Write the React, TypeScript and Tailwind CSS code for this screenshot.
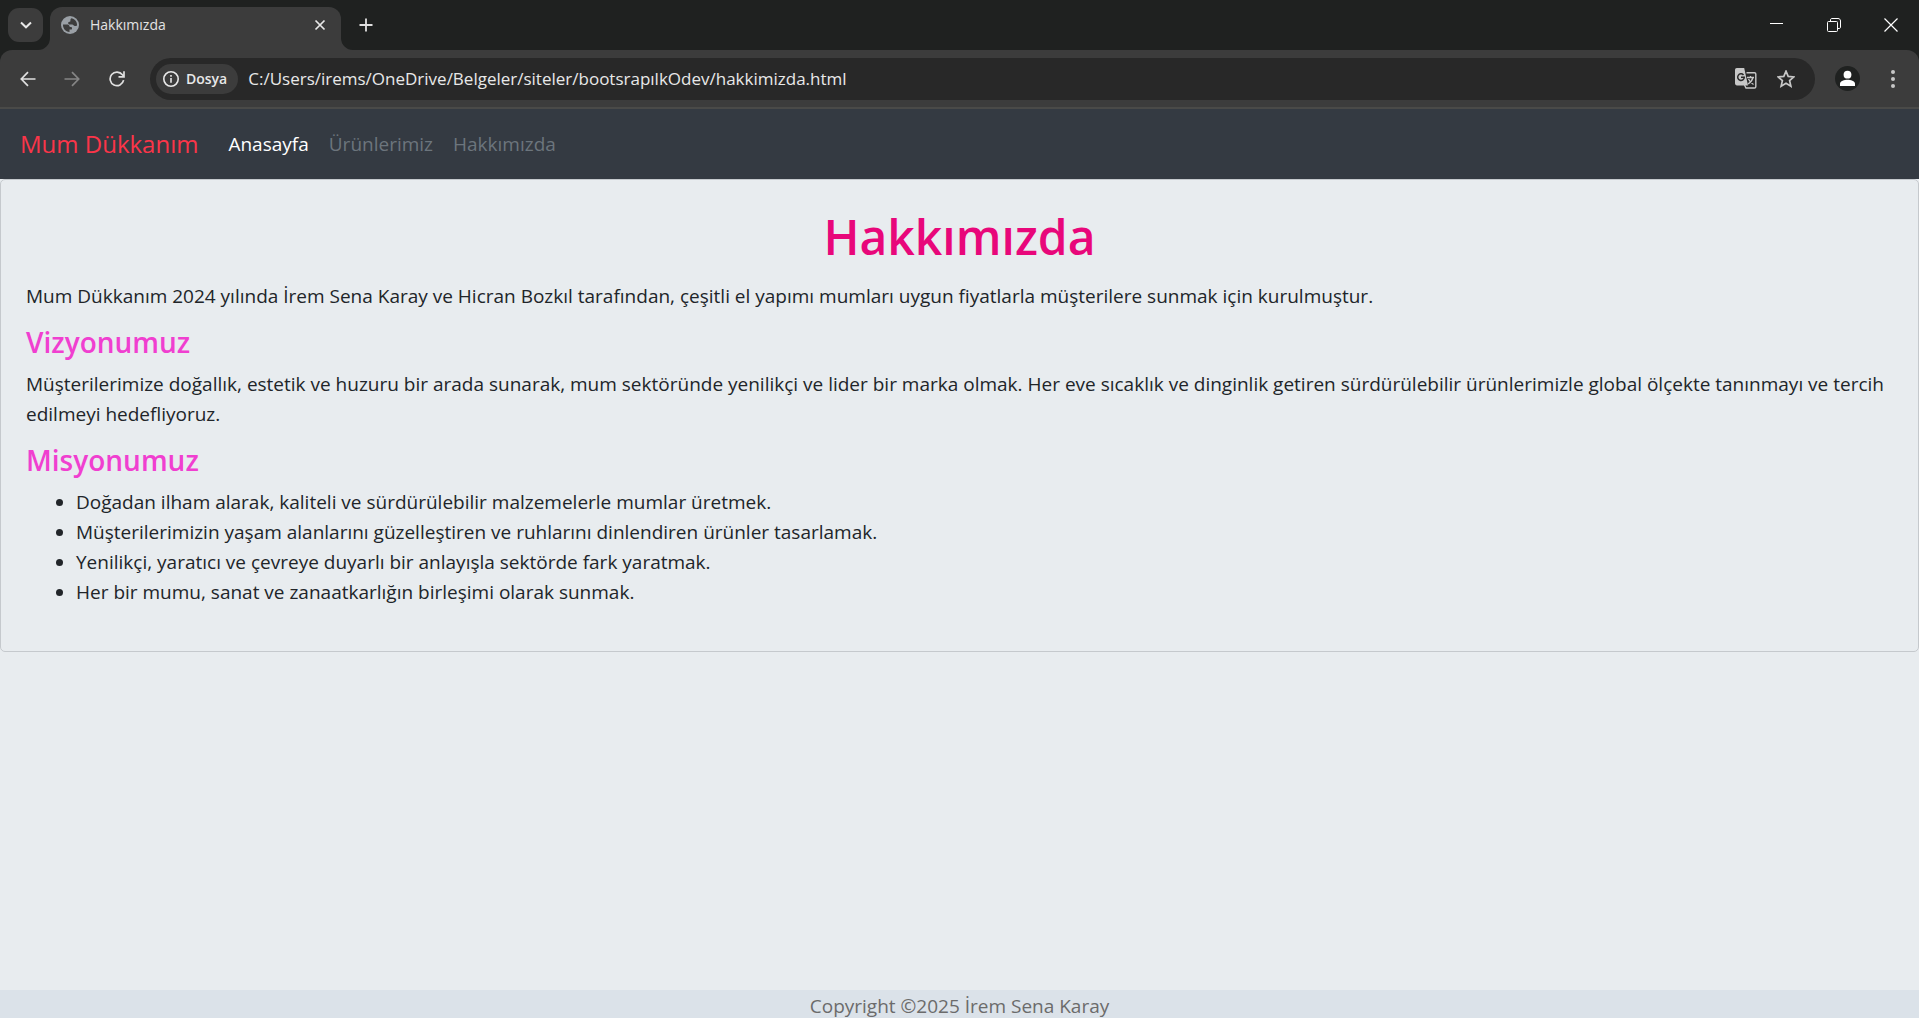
import React from "react";

const missions = [
  "Doğadan ilham alarak, kaliteli ve sürdürülebilir malzemelerle mumlar üretmek.",
  "Müşterilerimizin yaşam alanlarını güzelleştiren ve ruhlarını dinlendiren ürünler tasarlamak.",
  "Yenilikçi, yaratıcı ve çevreye duyarlı bir anlayışla sektörde fark yaratmak.",
  "Her bir mumu, sanat ve zanaatkarlığın birleşimi olarak sunmak.",
];

function TabStrip() {
  return (
    <div className="flex h-[50px] items-stretch bg-[#1f2120]">
      <div className="flex items-center pl-2 pr-[7px]">
        <button aria-label="Sekme ara" className="flex h-[34px] w-[35px] items-center justify-center rounded-[11px] bg-[#3c3c3c]">
          <svg width="12" height="8" viewBox="0 0 12 8" fill="none" stroke="#e8e8e8" strokeWidth="2">
            <path d="M1 1.5 6 6.3 11 1.5" />
          </svg>
        </button>
      </div>
      <div className="relative mt-[7px] flex w-[291px] items-center rounded-t-xl bg-[#3c3c3c] pb-[7px] pl-[11px] pr-[15px]">
        <svg className="absolute bottom-0 -left-3" width="12" height="12" viewBox="0 0 12 12" fill="#3c3c3c">
          <path d="M12 0v12H0A12 12 0 0 0 12 0z" />
        </svg>
        <svg className="absolute bottom-0 -right-3" width="12" height="12" viewBox="0 0 12 12" fill="#3c3c3c">
          <path d="M0 0v12h12A12 12 0 0 1 0 0z" />
        </svg>
        <svg width="18" height="18" viewBox="0 0 18 18">
          <circle cx="9" cy="9" r="9" fill="#9aa0a6" />
          <path
            d="M2 8.4h3.800c1.500 0 2.600.5 2.600 1.700 0 .8.500 1 1.300 1 .9 0 1.300.5 1.300 1.300 0 .9-.5 1.200-1.300 1.200H8.500v2.300C4.600 15.700 1.800 12.500 2 8.400z"
            fill="#3c3c3c"
          />
          <path
            d="M10.800 2.200C14 3 16.200 5.800 16.100 9.200c-.6.700-1.300 1-2.200.9-1.300-.1-1.500-1.500-2.700-1.500-1.500 0-3 .1-3.700-.7-.8-.9-.2-2.200.9-2.200.9 0 1-.6 1-1.300 0-1 .3-1.900 1.400-2.200z"
            fill="#3c3c3c"
          />
        </svg>
        <span className="ml-[11px] flex-1 text-sm text-[#e3e3e3]">Hakkımızda</span>
        <button aria-label="Sekmeyi kapat">
          <svg width="12" height="12" viewBox="0 0 12 12" stroke="#e8e8e8" strokeWidth="1.700">
            <path d="M1.500 1.500l9 9M10.500 1.500l-9 9" />
          </svg>
        </button>
      </div>
      <button aria-label="Yeni sekme" className="ml-[18px]">
        <svg width="14" height="14" viewBox="0 0 14 14" stroke="#e0e0e0" strokeWidth="1.800">
          <path d="M7 .5v13M.5 7h13" />
        </svg>
      </button>
      <div className="ml-auto flex items-center gap-[43px] pr-[21px]">
        <button aria-label="Simge durumuna küçült">
          <svg width="14" height="14" viewBox="0 0 14 14" stroke="#fff" shapeRendering="crispEdges">
            <path d="M0 5.500h13" />
          </svg>
        </button>
        <button aria-label="Önceki boyut">
          <svg width="14" height="14" viewBox="0 0 14 14" fill="none" stroke="#fff">
            <rect x=".5" y="3.500" width="10" height="10" rx="1" />
            <path d="M3.500 3V2c0-1 .5-1.500 1.500-1.500h6c1.500 0 2.500 1 2.500 2.500v6c0 1-.5 1.500-1.500 1.500h-1" />
          </svg>
        </button>
        <button aria-label="Kapat">
          <svg width="14" height="14" viewBox="0 0 14 14" stroke="#fff" strokeWidth="1.200">
            <path d="M.5.5l13 13M13.500.5l-13 13" />
          </svg>
        </button>
      </div>
    </div>
  );
}

function Toolbar() {
  return (
    <div className="bg-[#1f2120]">
      <div className="flex h-[59px] items-center rounded-t-xl border-b-2 border-[#4a4a48] bg-[#3c3c3c] pl-5 pr-6">
        <button aria-label="Geri">
          <svg width="16" height="16" viewBox="0 0 16 16" fill="none" stroke="#e0e0e0" strokeWidth="1.700">
            <path d="M15.500 8H1.500M8 1.200 1.300 8 8 14.800" />
          </svg>
        </button>
        <button aria-label="İleri" className="ml-[28px]">
          <svg width="16" height="16" viewBox="0 0 16 16" fill="none" stroke="#858585" strokeWidth="1.700">
            <path d="M.5 8h14M8 1.200 14.700 8 8 14.800" />
          </svg>
        </button>
        <button aria-label="Yenile" className="ml-[29px]">
          <svg width="16" height="16" viewBox="0 0 16 16" fill="none" stroke="#e0e0e0" strokeWidth="1.700">
            <path d="M14.600 9.200A6.800 6.800 0 1 1 13.400 3.800L15 5.500M15 .3v5.600H9.500" />
          </svg>
        </button>
        <div className="ml-[25px] flex h-[42px] flex-1 items-center rounded-full bg-[#282828] pl-[6px] pr-5">
          <button className="flex h-[30px] items-center rounded-full bg-[#3c3c3c] pl-[7px] pr-[11px] text-sm font-semibold text-[#e8e8e8]">
            <svg className="mr-[7px]" width="16" height="16" viewBox="0 0 16 16" fill="none" stroke="#e8e8e8" strokeWidth="1.600">
              <circle cx="8" cy="8" r="7.200" />
              <path d="M8 7v4.800M8 4v1.700" />
            </svg>
            Dosya
          </button>
          <input
            aria-label="Adres"
            className="ml-[10px] min-w-0 flex-1 bg-transparent text-[17px] text-[#e8e8e8] outline-none"
            defaultValue="C:/Users/irems/OneDrive/Belgeler/siteler/bootsrapılkOdev/hakkimizda.html"
          />
          <button aria-label="Bu sayfayı çevir">
            <svg width="22" height="22" viewBox="0 0 22 22">
              <path d="M11.500 4.800H19.500a1.300 1.300 0 0 1 1.300 1.300v12.600a1.300 1.300 0 0 1-1.300 1.300H11L9.500 17" fill="none" stroke="#c7c7c7" strokeWidth="1.400" />
              <path d="M12 9.500h7M15.500 8v1.500M18 9.500c-.8 3-2.500 5-5 6.500M13.500 11c1 2.300 2.500 4 5 5.500" fill="none" stroke="#c7c7c7" strokeWidth="1.300" />
              <path d="M1.800 0h7.400L13 17.400H1.800A1.800 1.800 0 0 1 0 15.600V1.800A1.800 1.800 0 0 1 1.800 0z" fill="#c7c7c7" />
              <path d="M8.500 7A3.300 3.300 0 1 0 9.300 9.300H6" fill="none" stroke="#282828" strokeWidth="1.500" />
            </svg>
          </button>
          <button aria-label="Bu sekmeye yer işareti koy" className="ml-5">
            <svg width="18" height="18" viewBox="0 0 18 18" fill="none" stroke="#c7c7c7" strokeWidth="1.700">
              <path d="M9 1.200l2.200 5.200 5.700.5-4.300 3.700 1.300 5.600L9 13.300l-4.900 2.900 1.300-5.600L1.100 6.900l5.700-.5z" />
            </svg>
          </button>
        </div>
        <button aria-label="Profil" className="ml-5">
          <svg width="25" height="25" viewBox="0 0 25 25">
            <circle cx="12.500" cy="12.500" r="12.500" fill="#1f2120" />
            <circle cx="12.500" cy="8.700" r="3.900" fill="#fff" />
            <path d="M5 20v-2.500c0-2.500 4.500-3.800 7.500-3.800s7.500 1.300 7.500 3.800V20z" fill="#fff" />
          </svg>
        </button>
        <button aria-label="Menü" className="ml-[31px]">
          <svg width="4" height="18" viewBox="0 0 4 18" fill="#c7c7c7">
            <circle cx="2" cy="2" r="2" />
            <circle cx="2" cy="9" r="2" />
            <circle cx="2" cy="16" r="2" />
          </svg>
        </button>
      </div>
    </div>
  );
}

export default function App() {
  return (
    <div className='flex min-h-screen flex-col bg-[#e8ecef] font-["Open_Sans","Noto_Sans",sans-serif] text-[#212529]'>
      <TabStrip />
      <Toolbar />
      <nav className="flex h-[70px] items-center bg-[#343a42] px-5">
        <a href="#" className="mr-[30px] text-2xl text-[#fb3549]">Mum Dükkanım</a>
        <div className="flex gap-5 text-[19px]">
          <a href="#" className="text-white">Anasayfa</a>
          <a href="#" className="text-[#6c757d]">Ürünlerimiz</a>
          <a href="#" className="text-[#6c757d]">Hakkımızda</a>
        </div>
      </nav>
      <main className="flex-1">
        <article className="rounded-[5px] border border-[#c5c9cd] px-[25px] pt-[27px] pb-11 text-[19px] leading-[30px]">
          <h1 className="mb-[14px] text-center text-5xl leading-[60px] font-semibold text-[#e8077a]">Hakkımızda</h1>
          <p className="mb-[13px]">
            Mum Dükkanım 2024 yılında İrem Sena Karay ve Hicran Bozkıl tarafından, çeşitli el yapımı mumları uygun fiyatlarla müşterilere sunmak için kurulmuştur.
          </p>
          <h2 className="mb-[9px] text-[28px] leading-9 font-semibold text-[#f03fd0]">Vizyonumuz</h2>
          <p className="mb-[13px]">
            Müşterilerimize doğallık, estetik ve huzuru bir arada sunarak, mum sektöründe yenilikçi ve lider bir marka olmak. Her eve sıcaklık ve dinginlik getiren sürdürülebilir ürünlerimizle global ölçekte tanınmayı ve tercih edilmeyi hedefliyoruz.
          </p>
          <h2 className="mb-[9px] text-[28px] leading-9 font-semibold text-[#f03fd0]">Misyonumuz</h2>
          <ul className="list-disc pl-[50px]">
            {missions.map((m) => (
              <li key={m}>{m}</li>
            ))}
          </ul>
        </article>
      </main>
      <footer className="h-7 bg-[#dbe2e9] text-center text-[19px] leading-8 text-[#6b6b6b]">Copyright ©2025 İrem Sena Karay</footer>
    </div>
  );
}
